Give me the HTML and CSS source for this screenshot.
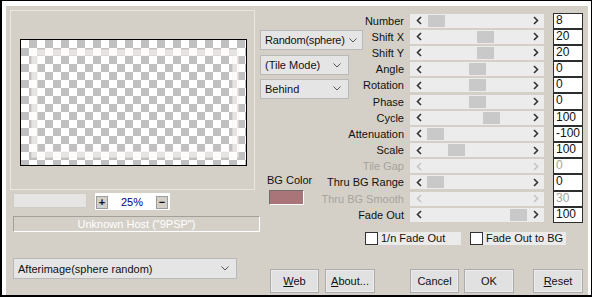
FILE: index.html
```html
<!DOCTYPE html>
<html lang="en">
<head>
    <meta charset="UTF-8">
    <title>Afterimage</title>
    <link rel="stylesheet" href="styles.css">
</head>
<body>
    <div class="frame">
        <div class="panel">
            <div class="left">
                <div class="group">
                    <div class="preview"><div class="ghost"></div></div>
                </div>
                <div class="zoom-row">
                    <div class="zoom-field"></div>
                    <div class="zoom-box">
                        <span class="zbtn">+</span>
                        <span class="zval">25%</span>
                        <span class="zbtn">&minus;</span>
                    </div>
                </div>
                <div class="host">Unknown Host ("9PSP")</div>
                <div class="select preset">
                    <span>Afterimage(sphere random)</span>
                    <svg width="8" height="5" viewBox="0 0 8 5"><polyline points="0.5,0.5 4,4 7.5,0.5" fill="none" stroke="#555" stroke-width="1"/></svg>
                </div>
            </div>

            <div class="right">
                <div class="params">
                    <div class="mid">
                        <div class="select sel-mode">
                            <span>Random(sphere)</span>
                            <svg width="8" height="5" viewBox="0 0 8 5"><polyline points="0.5,0.5 4,4 7.5,0.5" fill="none" stroke="#555" stroke-width="1"/></svg>
                        </div>
                        <div class="select sel-tile">
                            <span>(Tile Mode)</span>
                            <svg width="8" height="5" viewBox="0 0 8 5"><polyline points="0.5,0.5 4,4 7.5,0.5" fill="none" stroke="#555" stroke-width="1"/></svg>
                        </div>
                        <div class="select sel-tile">
                            <span>Behind</span>
                            <svg width="8" height="5" viewBox="0 0 8 5"><polyline points="0.5,0.5 4,4 7.5,0.5" fill="none" stroke="#555" stroke-width="1"/></svg>
                        </div>
                        <div class="bg-label">BG Color</div>
                        <div class="swatch"></div>
                    </div>
                </div>

                <div class="checks">
                    <label class="check"><span class="box"></span><span class="check-text">1/n Fade Out</span></label>
                    <label class="check"><span class="box"></span><span class="check-text">Fade Out to BG</span></label>
                </div>

                <div class="buttons">
                    <button class="btn btn-web"><u>W</u>eb</button>
                    <button class="btn btn-about"><u>A</u>bout...</button>
                    <button class="btn btn-cancel">Cancel</button>
                    <button class="btn btn-ok">OK</button>
                    <button class="btn btn-reset"><u>R</u>eset</button>
                </div>
            </div>
        </div>
    </div>

    <script>
        const params = [
            { name: 'Number', value: '8', pos: 0.5 },
            { name: 'Shift X', value: '20', pos: 49.6 },
            { name: 'Shift Y', value: '20', pos: 49.6 },
            { name: 'Angle', value: '0', pos: 41.7 },
            { name: 'Rotation', value: '0', pos: 41.7 },
            { name: 'Phase', value: '0', pos: 41.7 },
            { name: 'Cycle', value: '100', pos: 55.6 },
            { name: 'Attenuation', value: '-100', pos: 0 },
            { name: 'Scale', value: '100', pos: 21 },
            { name: 'Tile Gap', value: '0', pos: null },
            { name: 'Thru BG Range', value: '0', pos: 0 },
            { name: 'Thru BG Smooth', value: '30', pos: null },
            { name: 'Fade Out', value: '100', pos: 83 }
        ];

        const grid = document.querySelector('.params');
        const left = '<svg width="6" height="9" viewBox="0 0 6 9"><polyline points="5,1 1.5,4.5 5,8" fill="none" stroke-width="1.6"/></svg>';
        const right = '<svg width="6" height="9" viewBox="0 0 6 9"><polyline points="1,1 4.5,4.5 1,8" fill="none" stroke-width="1.6"/></svg>';

        params.forEach((p) => {
            const off = p.pos === null ? ' off' : '';
            const thumb = p.pos === null ? '' : `<span class="thumb" style="margin-left:${p.pos}px"></span>`;
            grid.insertAdjacentHTML('beforeend', `
                <div class="label${off}"><span>${p.name}</span></div>
                <div class="bar${off}">
                    <span class="arrow">${left}</span>
                    <span class="track">${thumb}</span>
                    <span class="arrow">${right}</span>
                </div>
                <div class="value${off}">${p.value}</div>
            `);
        });
    </script>
</body>
</html>
```

FILE: styles.css
```css
* {
    margin: 0;
    padding: 0;
    box-sizing: border-box;
}

body {
    background: #fff;
    font-family: 'Liberation Sans', Arial, sans-serif;
    font-size: 11px;
    color: #111;
}

.frame {
    width: 592px;
    height: 297px;
    border-left: 2px solid #000;
    border-top: 1px solid #000;
    border-right: 1px solid #000;
    border-bottom: 2px solid #000;
    padding: 5px 3px 0 4px;
    background: #fff;
}

.panel {
    display: flex;
    height: 100%;
    background: #d4d0c8;
}

/* left side */

.left {
    width: 254px;
    padding-left: 4px;
    padding-top: 4px;
    display: flex;
    flex-direction: column;
}

.group {
    width: 245px;
    height: 180px;
    border: 1px solid #e9e7e2;
    padding: 28px 0 0 9px;
}

.preview {
    width: 227px;
    height: 127px;
    border: 1px solid #000;
    background: repeating-conic-gradient(#c0c0c0 0 25%, #fff 0 50%) 0 0 / 16px 16px;
    padding: 10px 8px 8px 11px;
}

.ghost {
    width: 100%;
    height: 100%;
    border: 5px solid rgba(255, 250, 250, 0.6);
    box-shadow: 0 0 0 1px rgba(252, 236, 238, 0.45), inset 0 0 0 1px rgba(250, 232, 236, 0.5);
}

.zoom-row {
    display: flex;
    align-items: flex-start;
    margin-top: 3px;
    margin-left: 3px;
}

.zoom-field {
    width: 74px;
    height: 15px;
    background: #e6e5e3;
    border: 1px solid #cfccc6;
}

.zoom-box {
    width: 75px;
    height: 17px;
    margin-left: 8px;
    background: #fff;
    display: flex;
    align-items: center;
    padding: 1px 2px 0 1px;
}

.zbtn {
    width: 12px;
    height: 13px;
    border: 1px solid #9d9d9d;
    background: #d4d0c8;
    font-weight: bold;
    line-height: 11px;
    text-align: center;
}

.zval {
    flex: 1;
    text-align: center;
    color: #000080;
}

.host {
    width: 247px;
    height: 16px;
    margin: 6px 0 0 3px;
    border-top: 1px solid #a3a09a;
    border-left: 1px solid #a3a09a;
    border-right: 1px solid #fff;
    border-bottom: 1px solid #fff;
    color: #fff;
    text-align: center;
    line-height: 14px;
}

.select {
    height: 20px;
    background: #e5e5e5;
    border: 1px solid #b9b9b9;
    display: flex;
    align-items: center;
    justify-content: space-between;
    padding: 0 7px 0 4px;
    white-space: nowrap;
}

.preset {
    width: 224px;
    height: 21px;
    margin: 26px 0 0 3px;
}

/* right side */

.right {
    width: 324px;
    padding-top: 6.5px;
}

.params {
    display: grid;
    grid-template-columns: 60px 84px 140px 39px;
    grid-template-rows: repeat(13, 16.2px);
}

.mid {
    grid-column: 1;
    grid-row: 1 / 14;
    display: flex;
    flex-direction: column;
    align-items: flex-start;
    padding-top: 17.5px;
}

.sel-mode {
    width: 103px;
    padding-right: 5px;
    letter-spacing: -0.2px;
}

.sel-tile {
    width: 89px;
    margin-top: 5px;
}

.sel-tile + .sel-tile {
    margin-top: 3.5px;
}

.bg-label {
    margin: 75px 0 0 7px;
    line-height: 13px;
}

.swatch {
    width: 35px;
    height: 15px;
    margin: 3px 0 0 9px;
    background: #a97579;
    border-top: 1px solid #6f6f6f;
    border-left: 1px solid #6f6f6f;
    border-right: 1px solid #fff;
    border-bottom: 1px solid #fff;
}

.label {
    grid-column: 2;
    display: flex;
    justify-content: flex-end;
    align-items: center;
    white-space: nowrap;
}

.label.off {
    color: #a6a39d;
}

.bar {
    grid-column: 3;
    width: 134px;
    height: 14px;
    margin-left: 6px;
    align-self: center;
    background: #ececec;
    display: flex;
    align-items: center;
}

.arrow {
    width: 17px;
    display: flex;
    justify-content: center;
    stroke: #333;
}

.bar.off .arrow {
    stroke: #c4c4c4;
}

.track {
    flex: 1;
    display: flex;
}

.thumb {
    width: 17px;
    height: 12px;
    background: #c9c9c9;
}

.value {
    grid-column: 4;
    width: 30px;
    margin-left: 9px;
    background: #fff;
    border: 1px solid #2e2e2e;
    padding-left: 2px;
    font-size: 12px;
    line-height: 13px;
}

.value.off {
    color: #a6a39d;
}

.checks {
    display: flex;
    gap: 9px;
    margin-top: 9px;
    padding-left: 105px;
}

.check {
    display: flex;
    height: 13px;
}

.box {
    width: 13px;
    height: 13px;
    background: #fff;
    border: 1px solid #333;
}

.check-text {
    width: 83px;
    background: #ebebeb;
    padding-left: 3px;
    line-height: 13px;
    white-space: nowrap;
}

.buttons {
    display: flex;
    margin-top: 24px;
    padding-left: 10px;
}

.btn {
    width: 50px;
    height: 24px;
    background: #e1e1e1;
    border: 1px solid #acacac;
    box-shadow: inset 0 0 0 1px #ececec;
    font-family: 'Liberation Sans', Arial, sans-serif;
    font-size: 11px;
    color: #111;
}

.btn-web {
    width: 49px;
}

.btn-about {
    margin-left: 6px;
}

.btn-cancel {
    width: 49px;
    margin-left: 35px;
}

.btn-ok {
    margin-left: 5px;
}

.btn-reset {
    margin-left: 19px;
}
```
